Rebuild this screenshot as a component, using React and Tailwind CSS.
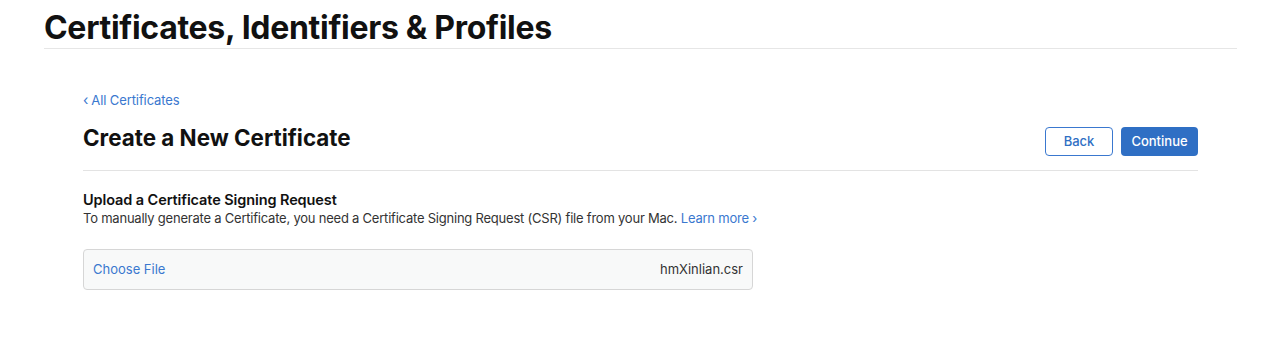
export default function App() {
  return (
    <div className="min-h-screen bg-white text-[#1d1d1f]" style={{ fontFamily: "Inter, 'Liberation Sans', sans-serif" }}>
      <header className="mx-[44px] pt-[8px] border-b border-[#e6e6e6] w-[1193px]">
        <h1 className="text-[32px] leading-[40px] font-bold tracking-[-0.3px] text-[#111]">
          Certificates, Identifiers &amp; Profiles
        </h1>
      </header>

      <main className="ml-[83px] w-[1115px] pt-[43px]">
        <a href="#" className="text-[13px] leading-[16px] text-[#3a78cf] flex items-center gap-[3px] tracking-[-0.1px]">
          <span className="text-[14px]">‹</span>
          All Certificates
        </a>

        <div className="flex items-end justify-between mt-[16px] pb-[14px] border-b border-[#e3e3e3]">
          <h2 className="text-[22.4px] leading-[28px] font-bold text-[#111] mb-[4px]">Create a New Certificate</h2>
          <div className="flex gap-[8px]">
            <button className="w-[68px] h-[29px] rounded-[4px] border border-[#3a78cf] text-[13px] font-medium text-[#2f6fc4]">
              Back
            </button>
            <button className="w-[77px] h-[29px] rounded-[4px] bg-[#2f6fc4] text-[13px] font-medium text-white">
              Continue
            </button>
          </div>
        </div>

        <section className="pt-[20px]">
          <h3 className="text-[14.5px] leading-[18px] font-semibold text-[#111] tracking-[-0.1px]">Upload a Certificate Signing Request</h3>
          <p className="text-[13px] leading-[18px] text-[#333] tracking-[-0.22px]">
            To manually generate a Certificate, you need a Certificate Signing Request (CSR) file from your Mac.{" "}
            <a href="#" className="text-[#3a78cf]">Learn more ›</a>
          </p>

          <div className="mt-[22px] w-[670px] h-[41px] rounded-[4px] border border-[#d6d6d6] bg-[#f8f9f9] flex items-center justify-between px-[9px]">
            <span className="text-[13px] text-[#3a78cf]">Choose File</span>
            <span className="text-[13px] text-[#333]">hmXinlian.csr</span>
          </div>
        </section>
      </main>
    </div>
  );
}
